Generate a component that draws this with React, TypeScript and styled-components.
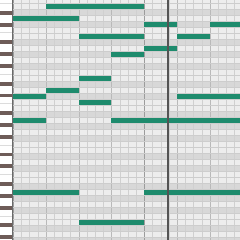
import React from 'react';
import styled, { createGlobalStyle } from 'styled-components';

const GlobalStyle = createGlobalStyle`
  html, body {
    margin: 0;
    padding: 0;
    overflow: hidden;
    background: #ececec;
    font-family: "Liberation Sans", Arial, sans-serif;
  }
`;

const STEP = 8.2; // one sixteenth
const ROWS = 41;
const BLACK = [2, 4, 7, 9, 11]; // row 0 is F, pitches go down

const Roll = styled.div`
  display: flex;
  width: 240px;
  height: 240px;
  overflow: hidden;
`;

const Keyboard = styled.div`
  flex: 0 0 12px;
  display: flex;
  flex-direction: column;
  margin-top: -2px;
  border-right: 1px solid #6a6a6a;
  background: #fff;
`;

const Key = styled.div<{ $black: boolean; $edge: boolean }>`
  height: 6px;
  box-sizing: border-box;
  background: ${(p) => (p.$black ? '#6e5c58' : '#ffffff')};
  border-top: 1px solid ${(p) => (p.$black ? '#ffffff' : 'transparent')};
  border-bottom: 1px solid
    ${(p) => (p.$black ? '#ffffff' : p.$edge ? '#dcdcdc' : 'transparent')};
`;

const Grid = styled.div`
  position: relative;
  flex: 1;
  display: flex;
  flex-direction: column;
  margin-top: -2px;
  min-width: 0;
`;

const Lane = styled.div<{ $black: boolean }>`
  display: grid;
  grid-template-columns: repeat(28, ${STEP}px);
  height: 6px;
  flex: 0 0 6px;
  box-sizing: border-box;
  border-bottom: 1px solid #cdcdcd;
  background-color: ${(p) => (p.$black ? '#d8d8d8' : '#ededed')};
  background-image:
    repeating-linear-gradient(to right, #9c9c9c 0 1px, transparent 1px ${STEP * 16}px),
    repeating-linear-gradient(to right, #b9b9b9 0 1px, transparent 1px ${STEP * 4}px),
    repeating-linear-gradient(to right, #d0d0d0 0 1px, transparent 1px ${STEP}px);
`;

const Note = styled.div<{ $start: number; $len: number }>`
  grid-column: ${(p) => p.$start + 1} / span ${(p) => p.$len};
  grid-row: 1;
  height: 100%;
  background: #1e8b6d;
`;

const Playhead = styled.div`
  position: absolute;
  top: 0;
  bottom: 0;
  left: 154px;
  width: 2px;
  background: #545454;
`;

type N = { row: number; start: number; len: number };

// row = visible row index (0 is the one at y=4)
const notes: N[] = [
  { row: 0, start: 4, len: 12 },
  { row: 2, start: 0, len: 8 },
  { row: 3, start: 16, len: 4 },
  { row: 3, start: 24, len: 4 },
  { row: 5, start: 8, len: 8 },
  { row: 5, start: 20, len: 4 },
  { row: 7, start: 16, len: 4 },
  { row: 8, start: 12, len: 4 },
  { row: 12, start: 8, len: 4 },
  { row: 14, start: 4, len: 4 },
  { row: 15, start: 0, len: 4 },
  { row: 15, start: 20, len: 8 },
  { row: 16, start: 8, len: 4 },
  { row: 19, start: 0, len: 4 },
  { row: 19, start: 12, len: 16 },
  { row: 31, start: 0, len: 8 },
  { row: 31, start: 16, len: 12 },
  { row: 36, start: 8, len: 8 },
];

const App: React.FC = () => {
  const rows = Array.from({ length: ROWS }, (_, k) => k);
  return (
    <>
      <GlobalStyle />
      <Roll>
        <Keyboard>
          {rows.map((k) => (
            <Key key={k} $black={BLACK.includes(k % 12)} $edge={k % 12 === 0 || k % 12 === 5} />
          ))}
        </Keyboard>
        <Grid>
          {rows.map((k) => (
            <Lane key={k} $black={BLACK.includes(k % 12)}>
              {notes
                .filter((n) => n.row + 1 === k)
                .map((n, i) => (
                  <Note key={i} $start={n.start} $len={n.len} />
                ))}
            </Lane>
          ))}
          <Playhead />
        </Grid>
      </Roll>
    </>
  );
};

export default App;
